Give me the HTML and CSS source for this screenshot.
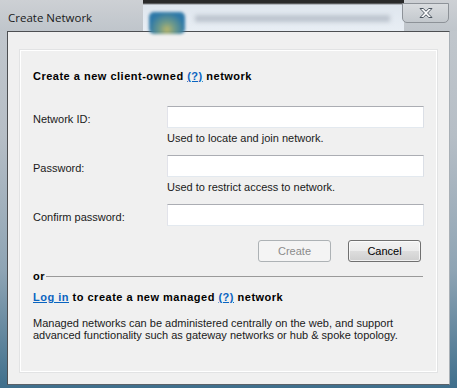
FILE: index.html
```html
<!DOCTYPE html>
<html lang="en">
<head>
  <meta charset="UTF-8">
  <title>Create Network</title>
  <link rel="stylesheet" href="styles.css">
</head>
<body>

  <div class="window">

    <!-- Title bar (glass) -->
    <div class="titlebar">
      <div class="behind">
        <div class="behind-icon"></div>
        <div class="behind-text"></div>
      </div>
      <span class="title">Create Network</span>
      <button class="close" aria-label="Close">
        <svg width="16" height="12" viewBox="0 0 16 12">
          <path d="M2 1.5h3.2l2.8 2.7 2.8-2.7H14L9.6 6l4.4 4.5h-3.2L8 7.8l-2.8 2.7H2L6.4 6z"
                fill="#fff" stroke="#4b5560" stroke-width="1" stroke-linejoin="round"/>
        </svg>
      </button>
    </div>

    <!-- Client area -->
    <div class="client">
      <div class="group">

        <h1 class="heading">Create a new client-owned <a href="#">(?)</a> network</h1>

        <div class="field">
          <label>Network ID:</label>
          <div>
            <input type="text">
            <p class="hint">Used to locate and join network.</p>
          </div>
        </div>

        <div class="field">
          <label>Password:</label>
          <div>
            <input type="password">
            <p class="hint">Used to restrict access to network.</p>
          </div>
        </div>

        <div class="field last">
          <label>Confirm password:</label>
          <div>
            <input type="password">
          </div>
        </div>

        <div class="actions">
          <button class="btn" disabled>Create</button>
          <button class="btn">Cancel</button>
        </div>

        <div class="divider"><span>or</span></div>

        <h2 class="heading"><a href="#">Log in</a> to create a new managed <a href="#">(?)</a> network</h2>

        <p class="info">Managed networks can be administered centrally on the web, and support
          advanced functionality such as gateway networks or hub &amp; spoke topology.</p>

      </div>
    </div>

  </div>

</body>
</html>
```

FILE: styles.css
```css
* {
  box-sizing: border-box;
}

body {
  margin: 0;
  width: 457px;
  height: 388px;
  overflow: hidden;
  font-family: 'Liberation Sans', Arial, sans-serif;
  font-size: 11px;
  color: #000;
}

.window {
  height: 388px;
  display: flex;
  flex-direction: column;
  padding: 0 7px 3px 7px;
  background: linear-gradient(180deg, #c4c9ce 0%, #b6bec6 35%, #8ea4b4 70%, #3f6f8c 100%);
  position: relative;
}

/* Title bar */

.titlebar {
  height: 31px;
  display: flex;
  align-items: flex-start;
  justify-content: space-between;
  position: relative;
  margin: 0 -7px;
  padding: 0 8px 0 8px;
  background: linear-gradient(180deg, #cdd0d4, #bfc5cb);
}

.behind {
  position: absolute;
  left: 143px;
  top: 0;
  width: 261px;
  height: 31px;
  background: linear-gradient(180deg, #2a2a2a 0, #2a2a2a 3px, #dfe6ee 5px, #e8eef4 100%);
  filter: blur(0.6px);
}

.behind-icon {
  position: absolute;
  left: 6px;
  top: 12px;
  width: 36px;
  height: 22px;
  border-radius: 5px;
  background: radial-gradient(ellipse at 50% 80%, #b9b56a 0, #6f9a8a 30%, #2d78a8 70%);
  filter: blur(1.5px);
}

.behind-text {
  position: absolute;
  left: 52px;
  top: 15px;
  width: 195px;
  height: 7px;
  background: #bcc4ce;
  filter: blur(2px);
}

.title {
  position: relative;
  font-family: 'Open Sans', 'Noto Sans', sans-serif;
  font-size: 11.5px;
  line-height: 16px;
  margin-top: 10px;
  color: #1a1a1a;
}

.close {
  position: relative;
  width: 47px;
  height: 20px;
  margin-top: 3px;
  padding: 0;
  border: 1px solid #8d9298;
  border-radius: 0 0 5px 5px;
  background: linear-gradient(180deg, #d9dcdf, #c3c8cd);
  display: flex;
  align-items: center;
  justify-content: center;
}

/* Client area */

.client {
  flex: 1;
  background: #f0f0f0;
  border: 1px solid;
  border-color: #4d4f52 #a9b0b6 #5a6168 #4d4f52;
  padding: 18px 12px 12px 12px;
  display: flex;
}

.group {
  flex: 1;
  border: 1px solid #fff;
  box-shadow: 0 0 0 1px #e2e3e4;
  padding: 19px 12px 0 12px;
}

.heading {
  margin: 0;
  font-size: 11px;
  font-weight: bold;
  line-height: 13px;
  letter-spacing: 0.5px;
}

.heading a,
.heading a:visited {
  color: #0a64c0;
}

.field {
  display: grid;
  grid-template-columns: 134px 1fr;
  height: 49px;
}

.field:first-of-type {
  margin-top: 23px;
}

.field.last {
  height: 22px;
}

.field label {
  line-height: 22px;
  padding-top: 2px;
  color: #1a1a1a;
}

.field input {
  display: block;
  width: 100%;
  height: 22px;
  margin: 0;
  border: 1px solid;
  border-color: #abadb3 #dbdfe6 #e3e9ef #e2e3ea;
  background: #fff;
  outline: none;
}

.hint {
  margin: 4px 0 0 0;
  line-height: 13px;
  color: #1a1a1a;
}

.actions {
  display: flex;
  justify-content: flex-end;
  gap: 17px;
  margin-top: 14px;
  padding-right: 3px;
}

.btn {
  width: 73px;
  height: 22px;
  padding: 0;
  font-family: inherit;
  font-size: 11px;
  color: #000;
  border: 1px solid #707070;
  border-radius: 3px;
  background: linear-gradient(180deg, #f2f2f2 0%, #ebebeb 50%, #dddddd 51%, #cfcfcf 100%);
  box-shadow: inset 0 0 0 1px rgba(255, 255, 255, 0.7);
}

.btn:disabled {
  color: #8b8b8b;
  border-color: #adb2b5;
  background: #f4f4f4;
  box-shadow: none;
}

.divider {
  display: flex;
  align-items: center;
  gap: 1px;
  margin-top: 8px;
  font-weight: bold;
  line-height: 13px;
  letter-spacing: 0.5px;
}

.divider::after {
  content: '';
  flex: 1;
  height: 1px;
  margin-right: 1px;
  background: #9a9a9a;
}

.divider + .heading {
  margin-top: 8px;
}

.info {
  margin: 13px 0 0 0;
  line-height: 12px;
  color: #1a1a1a;
}
```
